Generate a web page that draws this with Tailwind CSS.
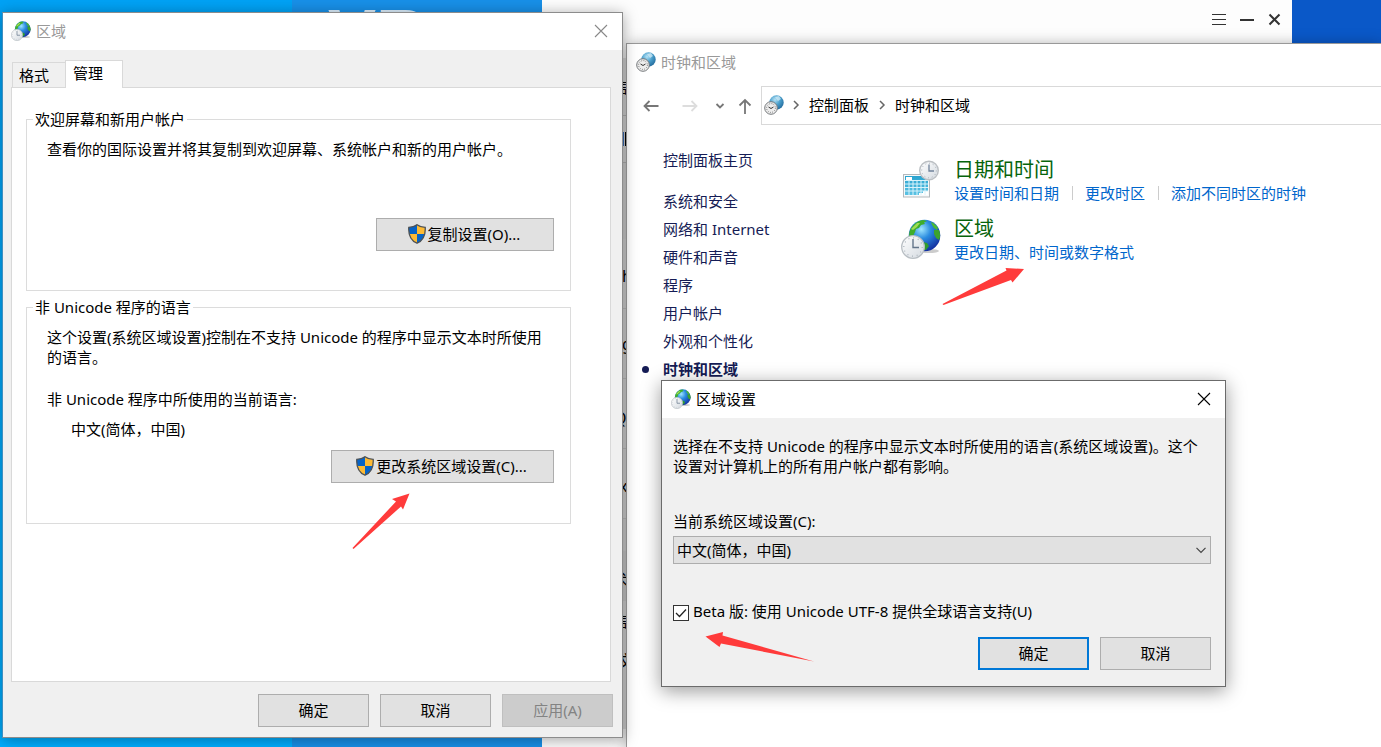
<!DOCTYPE html>
<html lang="zh-CN">
<head>
<meta charset="utf-8">
<title>区域设置</title>
<script src="https://cdn.jsdelivr.net/npm/@tailwindcss/browser@4"></script>
</head>
<body class="relative h-screen overflow-hidden bg-[#0a58c8] font-['Noto_Sans','Noto_Sans_CJK_SC',sans-serif] text-[15px] leading-5 text-black">

<svg width="0" height="0" class="absolute" aria-hidden="true">
  <defs>
    <radialGradient id="sea" cx="0.4" cy="0.3" r="0.75"><stop offset="0" stop-color="#9fe6ff"/><stop offset="0.4" stop-color="#2b8ce0"/><stop offset="1" stop-color="#10279a"/></radialGradient>
    <radialGradient id="plain" cx="0.4" cy="0.3" r="0.8"><stop offset="0" stop-color="#b5e2f5"/><stop offset="0.45" stop-color="#4a9fcc"/><stop offset="1" stop-color="#1b5f92"/></radialGradient>
    <linearGradient id="face" x1="0" y1="0" x2="1" y2="1"><stop offset="0" stop-color="#ffffff"/><stop offset="1" stop-color="#d4dae0"/></linearGradient>
    <linearGradient id="cal" x1="0" y1="0" x2="0" y2="1"><stop offset="0" stop-color="#2aa3cf"/><stop offset="1" stop-color="#5cc3e4"/></linearGradient>
    <symbol id="globe" viewBox="0 0 40 40">
      <ellipse cx="28" cy="32" rx="10" ry="2" fill="#000" opacity="0.2"/>
      <circle cx="23.500" cy="16.500" r="15.800" fill="url(#sea)"/>
      <path d="M8.500 13C10 7 16 1.500 22 1L26 2L23 3.500L24 5L20 6L18 9L15 10L14 13L12 17L10 19L8 17Z" fill="#3fae2b"/>
      <path d="M10 10L16 4L19 4L16 8L12 11Z" fill="#9fdc55"/>
      <path d="M30 3C33 4 36 7 37 9L36 11L33 9L31 6Z" fill="#4aba35"/>
      <path d="M33 11L38 11C39.500 15 39.500 18 38 21L35 19L33 15Z" fill="#3ca32c"/>
      <path d="M22 23L26 24L28 27L25 31L23 31Z" fill="#2f9c2c"/>
      <circle cx="12" cy="28" r="11.300" fill="url(#face)" stroke="#b9bfc4" stroke-width="1.300"/>
      <circle cx="12" cy="28" r="9.200" fill="none" stroke="#a9b2ba" stroke-width="1.200" stroke-dasharray="1 3.800"/>
      <path d="M12 20V28.500H18" fill="none" stroke="#64768a" stroke-width="1.400"/>
    </symbol>
    <symbol id="clockglobe" viewBox="0 0 20 20">
      <circle cx="12.500" cy="7.500" r="7.200" fill="url(#plain)"/>
      <path d="M11 2L15 1L17 4L14 6Z" fill="#d8f0fa" opacity="0.7"/>
      <circle cx="7" cy="13" r="6.300" fill="#ededed" stroke="#76797c" stroke-width="1"/>
      <circle cx="7" cy="13" r="4.400" fill="none" stroke="#666" stroke-width="0.900" stroke-dasharray="0.900 1.400"/>
      <path d="M4.500 12L7 13.500L9.500 12" fill="none" stroke="#333" stroke-width="1"/>
    </symbol>
    <symbol id="shield" viewBox="0 0 18 20">
      <path d="M9 0.500C7 2.300 4 3.300 0.800 3.300C0.300 11 2.500 16.500 9 19.300C15.500 16.500 17.700 11 17.200 3.300C14 3.300 11 2.300 9 0.500Z" fill="#fdba34"/>
      <path d="M9 0.500C7 2.300 4 3.300 0.800 3.300C0.700 6 0.900 8 1.500 10H9Z" fill="#0663c7"/>
      <path d="M9 19.300C13.500 17.300 15.700 14.200 16.500 10H9Z" fill="#0663c7"/>
      <path d="M9 0.700C7 2.300 4 3.300 0.800 3.300C0.300 11 2.500 16.500 9 19.200C15.500 16.500 17.700 11 17.200 3.300C14 3.300 11 2.300 9 0.700Z" fill="none" stroke="#4c5156" stroke-width="1.300"/>
    </symbol>
  </defs>
</svg>

<!-- Chat application behind the dialogs -->
<div class="absolute inset-y-0 left-0 right-[89px] flex bg-[#fdfdfd]">
  <div class="w-[292px] shrink-0 bg-linear-to-b from-[#00a2f5] to-[#00aeff]"></div>
  <div class="w-[250px] shrink-0 overflow-hidden bg-[#1890e8] pl-9">
    <div class="font-['Liberation_Sans',sans-serif] text-[72px] font-bold leading-[70px] text-white/85">VR</div>
  </div>
  <div class="min-w-0 flex-1">
    <header class="flex h-[40px] items-center justify-end gap-3 pr-[9px] text-[#333]">
      <button aria-label="菜单" class="h-4 w-4"><svg viewBox="0 0 16 16" class="h-4 w-4" stroke="currentColor"><path d="M1 2.500H15M1 7.500H15M1 12.500H15"/></svg></button>
      <button aria-label="最小化" class="h-4 w-4"><svg viewBox="0 0 16 16" class="h-4 w-4" stroke="currentColor" stroke-width="2"><path d="M1 8H15"/></svg></button>
      <button aria-label="关闭" class="h-4 w-4"><svg viewBox="0 0 16 16" class="h-4 w-4" stroke="currentColor" stroke-width="2"><path d="M2.500 2.500L12.500 12.500M12.500 2.500L2.500 12.500"/></svg></button>
    </header>
    <ul class="w-[90px] text-base">
      <li class="h-[18px]"></li>
      <li class="flex h-[58px] items-center overflow-hidden border-b border-[#c4c4c4] bg-[#e6e6e6] pl-[70px]">信</li>
      <li class="flex h-[47px] items-center overflow-hidden border-b border-[#c4c4c4] bg-[#e6e6e6] pl-[80px]"><i class="h-[14px] w-[5px] border-x-2 border-l-[#3e78c8] border-r-black"></i></li>
      <li class="h-[76px] bg-[#e2e2e2]"></li>
      <li class="flex h-[70px] items-center border-b border-[#d0d0d0] bg-[#e6e6e6] pl-[80px] pt-1">h</li>
      <li class="flex h-[70px] items-center border-b border-[#d0d0d0] bg-[#e6e6e6] pl-[80px]">g</li>
      <li class="flex h-[70px] items-center border-b border-[#d0d0d0] bg-[#e6e6e6] pl-[72px] pt-2">Q</li>
      <li class="flex h-[70px] items-center border-b border-[#d0d0d0] bg-[#e6e6e6] pl-[77px] pt-1">x</li>
      <li class="h-[32px] bg-[#e2e2e2]"></li>
      <li class="flex h-[50px] items-center overflow-hidden bg-[#dcdcdc] pl-[70px] pt-2">术</li>
      <li class="flex h-[40px] items-center overflow-hidden bg-[#e6e6e6] pl-[70px]">信</li>
      <li class="flex h-[40px] items-center overflow-hidden bg-[#e6e6e6] pl-[76px]">文</li>
      <li class="h-[48px] bg-[#e6e6e6]"></li>
    </ul>
  </div>
</div>

<!-- Control Panel window -->
<section class="absolute bottom-0 left-[626px] right-0 top-[43px] border-l border-t border-[#999] bg-white shadow-[0_2px_14px_rgba(0,0,0,0.35)]">
  <header class="flex h-[38px] items-center gap-[5px] pb-0.5 pl-[9px] text-[#999]">
    <svg class="h-5 w-5"><use href="#clockglobe"/></svg>
    <h1>时钟和区域</h1>
  </header>
  <nav class="flex items-center pl-4 pt-1">
    <div class="flex w-[118px] items-center justify-between pr-[8px] text-[#777]">
      <button aria-label="后退" class="h-4 w-4"><svg viewBox="0 0 16 16" class="h-4 w-4" fill="none" stroke="currentColor" stroke-width="1.800"><path d="M15.500 8H1M6.500 3L1.500 8L6.500 13"/></svg></button>
      <button aria-label="前进" class="ml-[18px] h-4 w-4 text-[#ddd]"><svg viewBox="0 0 16 16" class="h-4 w-4" fill="none" stroke="currentColor" stroke-width="1.800"><path d="M0.500 8H15M9.500 3L14.500 8L9.500 13"/></svg></button>
      <button aria-label="最近的位置" class="ml-2.5 h-4 w-4"><svg viewBox="0 0 16 16" class="h-4 w-4" fill="none" stroke="currentColor" stroke-width="1.800"><path d="M4.500 6L8 9.500L11.500 6"/></svg></button>
      <button aria-label="上移" class="ml-1 h-4 w-4"><svg viewBox="0 0 16 16" class="h-4 w-4" fill="none" stroke="currentColor" stroke-width="1.800"><path d="M8 16V2M2.500 7.500L8 2L13.500 7.500"/></svg></button>
    </div>
    <div class="flex h-[39px] flex-1 items-center border-y border-l border-[#d9d9d9] pb-0.5 pl-[2px]">
      <svg class="h-5 w-5"><use href="#clockglobe"/></svg>
      <svg viewBox="0 0 10 10" class="mx-[7px] h-[10px] w-[10px]" fill="none" stroke="#666" stroke-width="1.500"><path d="M3 1L7 5L3 9"/></svg>
      <a href="#panel" class="ml-px">控制面板</a>
      <svg viewBox="0 0 10 10" class="mx-2 h-[10px] w-[10px]" fill="none" stroke="#666" stroke-width="1.500"><path d="M3 1L7 5L3 9"/></svg>
      <a href="#clock">时钟和区域</a>
    </div>
  </nav>
  <div class="flex items-start">
    <ul class="flex w-[274px] shrink-0 flex-col gap-2 pl-9 pt-[25px] text-[#151c55]">
      <li class="mb-[13px]"><a href="#home">控制面板主页</a></li>
      <li><a href="#security">系统和安全</a></li>
      <li><a href="#network">网络和 Internet</a></li>
      <li><a href="#hardware">硬件和声音</a></li>
      <li><a href="#programs">程序</a></li>
      <li><a href="#users">用户帐户</a></li>
      <li><a href="#look">外观和个性化</a></li>
      <li class="relative font-bold before:absolute before:-left-[21px] before:top-[7px] before:h-[7px] before:w-[7px] before:rounded-full before:bg-[#151c55]"><a href="#clock">时钟和区域</a></li>
    </ul>
    <div class="flex flex-col gap-3 pt-[31px]">
      <section class="flex gap-[13px]">
        <svg viewBox="0 0 40 40" class="mt-1 h-10 w-10">
          <rect x="2.500" y="14.500" width="26" height="22.500" fill="#f7f9fa" stroke="#b3b9bd"/>
          <rect x="4" y="16" width="23" height="19" fill="url(#cal)"/>
          <path d="M5 17H11V20H5ZM22 31H27V35H18V33H22Z" fill="#fff"/>
          <path d="M4 20.500H27M4 24H27M4 27.500H27M4 31H27M8 20V35M12 20V35M16 20V35M20 20V35M24 20V35" stroke="#d8f3fb" stroke-width="1"/>
          <circle cx="28" cy="10.500" r="9.300" fill="url(#face)" stroke="#bcc0c4" stroke-width="1.400"/>
          <circle cx="28" cy="10.500" r="7.300" fill="none" stroke="#a6afb8" stroke-dasharray="1 2.800"/>
          <path d="M28 4.500V11H33" fill="none" stroke="#70839a" stroke-width="1.300"/>
        </svg>
        <div>
          <h2 class="text-[20px] leading-[27px] text-[#06640b]"><a href="#datetime">日期和时间</a></h2>
          <div class="flex items-center text-[#0066cc]">
            <a href="#set">设置时间和日期</a><i class="ml-[13px] mr-3 h-[14px] w-px bg-[#ccc]"></i><a href="#zone">更改时区</a><i class="ml-[13px] mr-3 h-[14px] w-px bg-[#ccc]"></i><a href="#add">添加不同时区的时钟</a>
          </div>
        </div>
      </section>
      <section class="flex gap-[13px]">
        <svg class="mt-1 h-10 w-10"><use href="#globe"/></svg>
        <div>
          <h2 class="text-[20px] leading-[27px] text-[#06640b]"><a href="#region">区域</a></h2>
          <a href="#format" class="block text-[#0066cc]">更改日期、时间或数字格式</a>
        </div>
      </section>
    </div>
  </div>
</section>

<!-- Region dialog -->
<section class="absolute left-[2px] top-[12px] w-[621px] border border-[#8c8c8c] border-l-[#3f8fc0] bg-[#f0f0f0] shadow-[0_2px_14px_rgba(0,0,0,0.35)]">
  <header class="flex h-[37px] items-center bg-white pb-0.5 pl-2 pr-[14px] text-[#999]">
    <svg class="h-5 w-5"><use href="#globe"/></svg>
    <h1 class="ml-[5px] flex-1">区域</h1>
    <button aria-label="关闭区域窗口" class="h-[14px] w-[14px]"><svg viewBox="0 0 14 14" class="h-[14px] w-[14px]" stroke="#888" stroke-width="1.100"><path d="M1 1L13 13M13 1L1 13"/></svg></button>
  </header>
  <div class="px-2 pb-[10px] pt-[10px]">
    <div class="relative z-10 -mb-px flex items-end pl-px" role="tablist">
      <button role="tab" aria-selected="false" class="h-[26px] w-[53px] border border-r-0 border-[#d9d9d9] px-[6px] text-left">格式</button>
      <button role="tab" aria-selected="true" class="h-[28px] w-[58px] border border-b-0 border-[#d9d9d9] bg-white px-[7px] pb-1 text-left">管理</button>
    </div>
    <div class="mr-[3px] h-[595px] border border-[#d9d9d9] bg-white pl-[14px] pr-[39px] pt-[21px]">
      <fieldset class="h-[182px] border border-[#dcdcdc] pl-5 pr-4">
        <legend class="-ml-[14px] px-[2px]">欢迎屏幕和新用户帐户</legend>
        <p class="pt-[10px]">查看你的国际设置并将其复制到欢迎屏幕、系统帐户和新的用户帐户。</p>
        <div class="flex justify-end pt-[59px]">
          <button class="flex h-[33px] w-[178px] items-center justify-center border border-[#adadad] bg-[#e1e1e1] pb-0.5 pr-0.5"><svg class="h-5 w-[18px]"><use href="#shield"/></svg><span class="ml-0.5">复制设置(O)...</span></button>
        </div>
      </fieldset>
      <fieldset class="mt-[6px] h-[227px] border border-[#dcdcdc] pl-5 pr-4">
        <legend class="-ml-[14px] px-[2px]">非 Unicode 程序的语言</legend>
        <p class="pt-[10px]">这个设置(系统区域设置)控制在不支持 Unicode 的程序中显示文本时所使用的语言。</p>
        <p class="pt-[22px]">非 Unicode 程序中所使用的当前语言:</p>
        <p class="pl-6 pt-[10px]">中文(简体，中国)</p>
        <div class="flex justify-end pt-[11px]">
          <button class="flex h-[33px] w-[223px] items-center justify-center border border-[#adadad] bg-[#e1e1e1] pb-0.5 pr-0.5"><svg class="h-5 w-[18px]"><use href="#shield"/></svg><span class="ml-0.5">更改系统区域设置(C)...</span></button>
        </div>
      </fieldset>
    </div>
    <div class="flex justify-end gap-[11px] pr-px pt-3">
      <button class="h-[33px] w-[111px] border border-[#adadad] bg-[#e1e1e1] pb-0.5">确定</button>
      <button class="h-[33px] w-[111px] border border-[#adadad] bg-[#e1e1e1] pb-0.5">取消</button>
      <button disabled class="h-[33px] w-[111px] border border-[#bfbfbf] bg-[#ccc] pb-0.5 text-[#838383]">应用(A)</button>
    </div>
  </div>
</section>

<!-- Region settings dialog -->
<section class="absolute left-[661px] top-[380px] w-[565px] border border-[#6b6b6b] bg-[#f0f0f0] shadow-[0_4px_18px_rgba(0,0,0,0.4)]">
  <header class="flex h-[37px] items-center bg-white pb-0.5 pl-[9px] pr-[14px]">
    <svg class="h-5 w-5"><use href="#globe"/></svg>
    <h1 class="ml-[5px] flex-1">区域设置</h1>
    <button aria-label="关闭区域设置" class="h-[14px] w-[14px]"><svg viewBox="0 0 14 14" class="h-[14px] w-[14px]" stroke="#000" stroke-width="1.100"><path d="M1 1L13 13M13 1L1 13"/></svg></button>
  </header>
  <div class="px-[11px] pb-4 pr-[14px] pt-[18px]">
    <p>选择在不支持 Unicode 的程序中显示文本时所使用的语言(系统区域设置)。这个设置对计算机上的所有用户帐户都有影响。</p>
    <label for="locale" class="mt-[35px] block">当前系统区域设置(C):</label>
    <div class="relative mt-[5px]">
      <select id="locale" class="block h-[28px] w-full appearance-none border border-[#adadad] bg-[#e1e1e1] pl-[3px]"><option>中文(简体，中国)</option></select>
      <svg viewBox="0 0 10 10" class="pointer-events-none absolute right-[5px] top-[9px] h-[10px] w-[10px]" fill="none" stroke="#444" stroke-width="1.200"><path d="M0.500 2.800L5 7.300L9.500 2.800"/></svg>
    </div>
    <div class="mt-[37px] flex items-center gap-1">
      <span class="relative mt-1 h-4 w-4">
        <input id="utf8" type="checkbox" checked class="block h-4 w-4 appearance-none border border-[#333] bg-white">
        <svg viewBox="0 0 16 16" class="pointer-events-none absolute inset-0 h-4 w-4" fill="none" stroke="#222" stroke-width="1.300"><path d="M3 8L6.500 11.500L13 4.500"/></svg>
      </span>
      <label for="utf8">Beta 版: 使用 Unicode UTF-8 提供全球语言支持(U)</label>
    </div>
    <div class="mt-4 flex justify-end gap-[11px]">
      <button class="h-[33px] w-[111px] border-2 border-[#0078d7] bg-[#e1e1e1] pb-0.5">确定</button>
      <button class="h-[33px] w-[111px] border border-[#adadad] bg-[#e1e1e1] pb-0.5">取消</button>
    </div>
  </div>
</section>

<!-- Red pointer arrows drawn over the windows -->
<svg class="pointer-events-none absolute left-[352px] top-[492px] h-[58px] w-[58px]" viewBox="0 0 58 58" fill="#ff3b3b"><path d="M57.500 1.500L40 7L44 9.500L0.500 56L1.500 57L49 14.500L51 17.500Z"/></svg>
<svg class="pointer-events-none absolute left-[942px] top-[267px] h-[39px] w-[83px]" viewBox="0 0 83 39" fill="#ff3b3b"><path d="M82 2L63.500 1L64.500 3.500L0.500 37L1.500 38L69 13L70.500 15.500Z"/></svg>
<svg class="pointer-events-none absolute left-[705px] top-[631px] h-[32px] w-[111px]" viewBox="0 0 111 32" fill="#ff3b3b"><path d="M0.500 5.500L18 1L17.500 4.500L109 30.500L16 12.500L14.500 16Z"/></svg>
</body>
</html>
